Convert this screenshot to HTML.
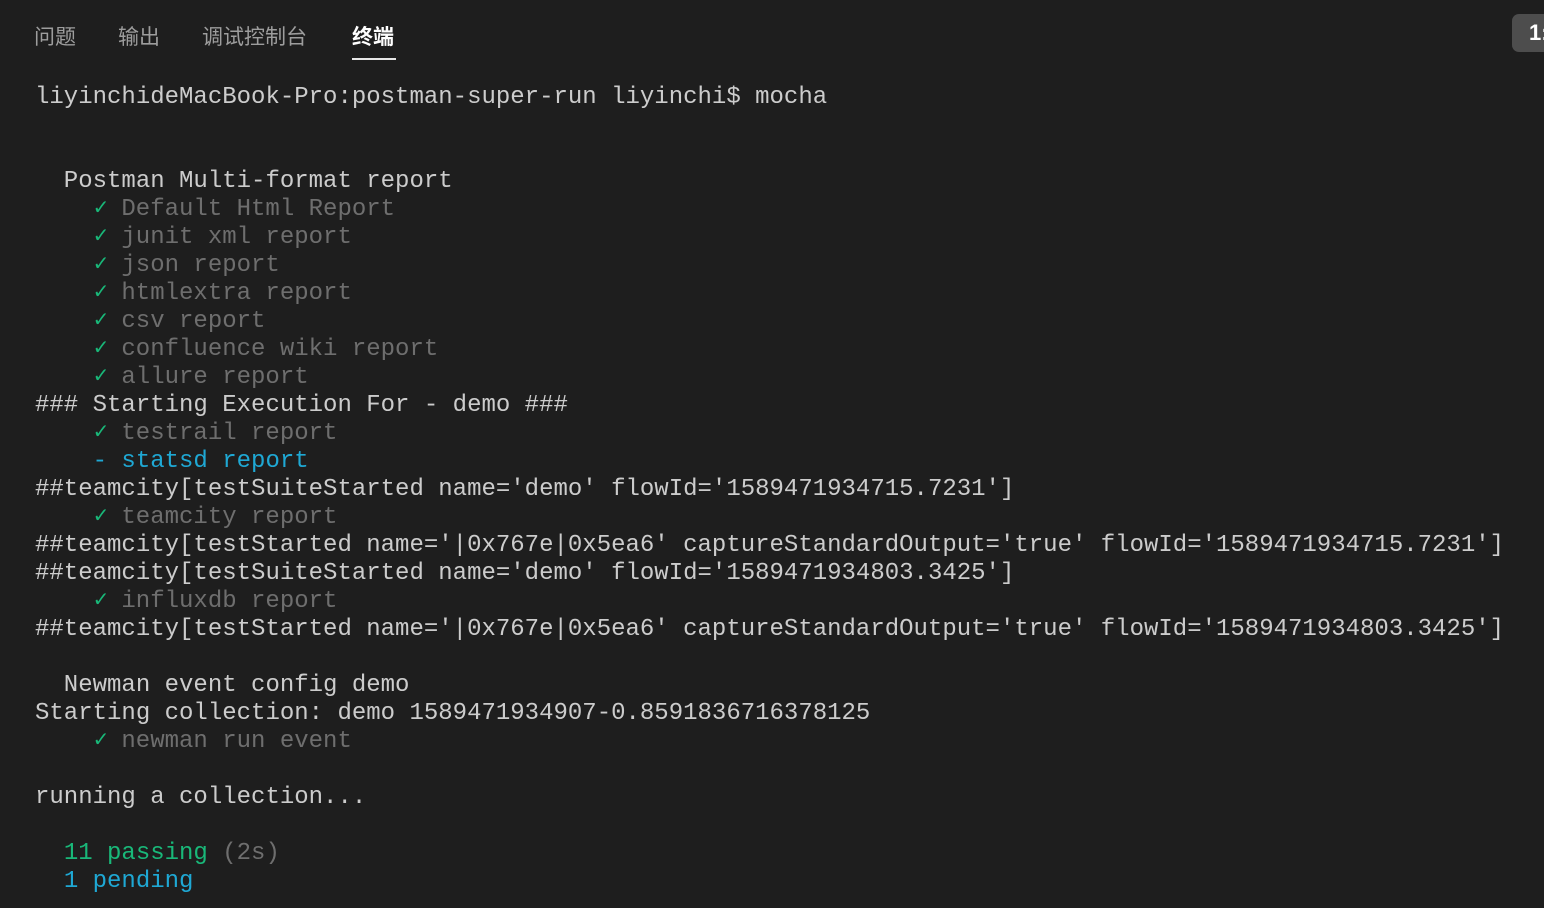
<!DOCTYPE html>
<html><head><meta charset="utf-8"><style>
html,body{margin:0;padding:0;background:#1e1e1e;width:1544px;height:908px;overflow:hidden}
.tabs{position:absolute;top:21px;left:0;height:30px;font-family:"Liberation Sans","Noto Sans CJK SC",sans-serif;font-size:21px;color:#9d9d9d}
.tabs span{position:absolute;top:0;white-space:nowrap}
.act{color:#fff;font-weight:bold}
.ul{position:absolute;left:352px;top:58px;width:44px;height:2px;background:#e7e7e7}
.badge{position:absolute;left:1512px;top:14px;width:60px;height:38px;border-radius:7px;background:#4d4d4d;color:#fff;font-family:"Liberation Sans",sans-serif;font-size:22px;line-height:38px;padding-left:17px;box-sizing:border-box;font-weight:bold}
pre{position:absolute;left:35px;top:84px;margin:0;font-family:"Liberation Mono",monospace;font-size:24px;line-height:28px;color:#cccccc}
.g{color:#6e6e6e}.ok{color:#19b879}.c{color:#1fa8d4}
.k{display:inline-block;width:14.4px;height:28px;line-height:28px;vertical-align:top;overflow:visible;font-size:20px;color:#19b879;text-align:center}
</style></head><body>
<div class="tabs"><span style="left:34px">问题</span><span style="left:118px">输出</span><span style="left:202px">调试控制台</span><span class="act" style="left:352px">终端</span></div>
<div class="ul"></div>
<div class="badge">1:</div>
<pre>liyinchideMacBook-Pro:postman-super-run liyinchi$ mocha


  Postman Multi-format report
    <span class="k">✓</span><span class="g"> Default Html Report</span>
    <span class="k">✓</span><span class="g"> junit xml report</span>
    <span class="k">✓</span><span class="g"> json report</span>
    <span class="k">✓</span><span class="g"> htmlextra report</span>
    <span class="k">✓</span><span class="g"> csv report</span>
    <span class="k">✓</span><span class="g"> confluence wiki report</span>
    <span class="k">✓</span><span class="g"> allure report</span>
### Starting Execution For - demo ###
    <span class="k">✓</span><span class="g"> testrail report</span>
    <span class="c">- statsd report</span>
##teamcity[testSuiteStarted name='demo' flowId='1589471934715.7231']
    <span class="k">✓</span><span class="g"> teamcity report</span>
##teamcity[testStarted name='|0x767e|0x5ea6' captureStandardOutput='true' flowId='1589471934715.7231']
##teamcity[testSuiteStarted name='demo' flowId='1589471934803.3425']
    <span class="k">✓</span><span class="g"> influxdb report</span>
##teamcity[testStarted name='|0x767e|0x5ea6' captureStandardOutput='true' flowId='1589471934803.3425']

  Newman event config demo
Starting collection: demo 1589471934907-0.8591836716378125
    <span class="k">✓</span><span class="g"> newman run event</span>

running a collection...

  <span class="ok">11 passing</span><span class="g"> (2s)</span>
  <span class="c">1 pending</span>
</pre>
</body></html>
